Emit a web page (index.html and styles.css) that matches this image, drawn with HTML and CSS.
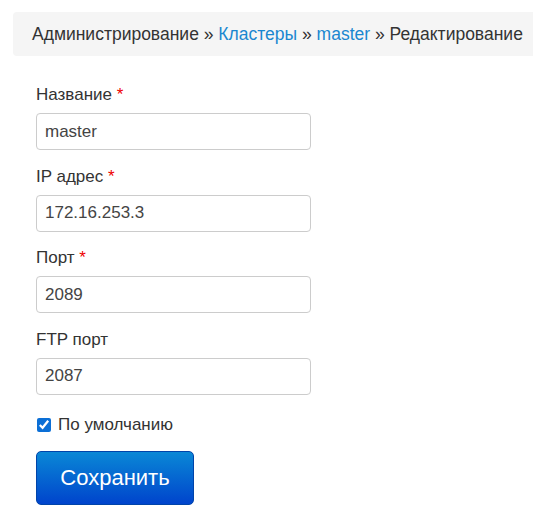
FILE: index.html
```html
<!DOCTYPE html>
<html lang="ru">
<head>
<meta charset="utf-8">
<link rel="stylesheet" href="styles.css">
</head>
<body>
<div class="page">
  <div class="breadcrumb">
    <span>Администрирование</span> <span class="sep">»</span>
    <a href="#">Кластеры</a> <span class="sep">»</span>
    <a href="#">master</a> <span class="sep">»</span>
    <span>Редактирование</span>
  </div>
  <form class="form">
    <div class="field">
      <label class="label">Название <span class="req">*</span></label>
      <input class="input" type="text" value="master">
    </div>
    <div class="field">
      <label class="label">IP адрес <span class="req">*</span></label>
      <input class="input" type="text" value="172.16.253.3">
    </div>
    <div class="field">
      <label class="label">Порт <span class="req">*</span></label>
      <input class="input" type="text" value="2089">
    </div>
    <div class="field">
      <label class="label">FTP порт</label>
      <input class="input" type="text" value="2087">
    </div>
    <label class="check">
      <input type="checkbox" checked>
      <span>По умолчанию</span>
    </label>
    <button class="btn" type="button">Сохранить</button>
  </form>
</div>
</body>
</html>
```
FILE: styles.css
```css
html, body {
  margin: 0;
  padding: 0;
  background: #fff;
}
body {
  font-family: "Liberation Sans", Arial, sans-serif;
  color: #333;
  font-size: 17px;
}
.page {
  padding: 12px 0 0 13px;
}
.breadcrumb {
  background: #f5f5f5;
  border-radius: 4px 0 0 4px;
  height: 44px;
  line-height: 44px;
  padding-left: 19px;
  white-space: nowrap;
  font-size: 17.5px;
  color: #333;
}
.breadcrumb a {
  color: #1a87d0;
  text-decoration: none;
}
.form {
  padding: 29px 0 0 23px;
  display: flex;
  flex-direction: column;
  align-items: flex-start;
}
.field {
  display: flex;
  flex-direction: column;
  align-items: flex-start;
  margin-bottom: 16.5px;
}
.label {
  line-height: 20px;
  margin-bottom: 8px;
}
.req {
  color: #e00;
}
.input {
  box-sizing: border-box;
  width: 275px;
  height: 37px;
  border: 1px solid #ccc;
  border-radius: 4px;
  padding: 0 8px;
  font-family: "Liberation Sans", Arial, sans-serif;
  font-size: 17px;
  color: #444;
  margin: 0;
}
.check {
  display: flex;
  align-items: center;
  gap: 7px;
  margin-top: 4px;
  line-height: 20px;
}
.check input {
  width: 14px;
  height: 14px;
  margin: 0 0 0 1px;
  accent-color: #0b6fd6;
}
.btn {
  margin-top: 16px;
  width: 158px;
  height: 54px;
  border: 1px solid #0044aa;
  border-radius: 5px;
  background: linear-gradient(to bottom, #0a88d6, #0044cc);
  color: #fff;
  font-family: "Liberation Sans", Arial, sans-serif;
  font-size: 22px;
  padding: 0;
}
```
